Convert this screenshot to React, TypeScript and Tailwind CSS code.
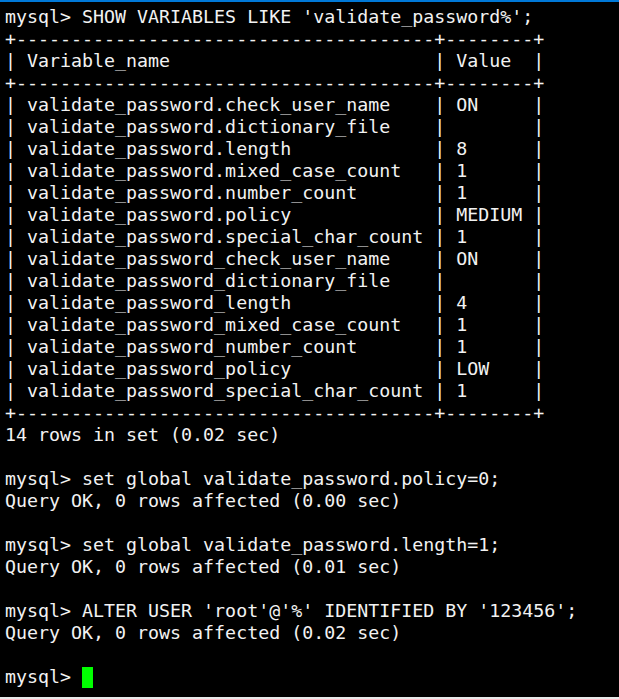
const rows: [string, string][] = [
  ["validate_password.check_user_name", "ON"],
  ["validate_password.dictionary_file", ""],
  ["validate_password.length", "8"],
  ["validate_password.mixed_case_count", "1"],
  ["validate_password.number_count", "1"],
  ["validate_password.policy", "MEDIUM"],
  ["validate_password.special_char_count", "1"],
  ["validate_password_check_user_name", "ON"],
  ["validate_password_dictionary_file", ""],
  ["validate_password_length", "4"],
  ["validate_password_mixed_case_count", "1"],
  ["validate_password_number_count", "1"],
  ["validate_password_policy", "LOW"],
  ["validate_password_special_char_count", "1"],
]

const border = "+" + "-".repeat(38) + "+" + "-".repeat(8) + "+"
const row = (a: string, b: string) => "| " + a.padEnd(36) + " | " + b.padEnd(6) + " |"

const lines: string[] = [
  "mysql> SHOW VARIABLES LIKE 'validate_password%';",
  border,
  row("Variable_name", "Value"),
  border,
  ...rows.map(([a, b]) => row(a, b)),
  border,
  "14 rows in set (0.02 sec)",
  "",
  "mysql> set global validate_password.policy=0;",
  "Query OK, 0 rows affected (0.00 sec)",
  "",
  "mysql> set global validate_password.length=1;",
  "Query OK, 0 rows affected (0.01 sec)",
  "",
  "mysql> ALTER USER 'root'@'%' IDENTIFIED BY '123456';",
  "Query OK, 0 rows affected (0.02 sec)",
  "",
]

export default function App() {
  return (
    <div className="w-[619px] h-[699px] bg-black border-t-2 border-[#0078d7] border-b-2 border-b-[#e8e8e8] overflow-hidden">
      <pre className="pl-[5px] pt-[4px] text-[#f2f2f2] text-[18.3px] leading-[22px] font-['DejaVu_Sans_Mono',monospace] whitespace-pre">
        {lines.map((l, i) => (
          <div key={i} className="h-[22px]">{l}</div>
        ))}
        <div className="h-[22px] flex items-center">
          <span>mysql&gt; </span>
          <span className="inline-block w-[11px] h-[21px] bg-[#00ff00]" />
        </div>
      </pre>
    </div>
  )
}
